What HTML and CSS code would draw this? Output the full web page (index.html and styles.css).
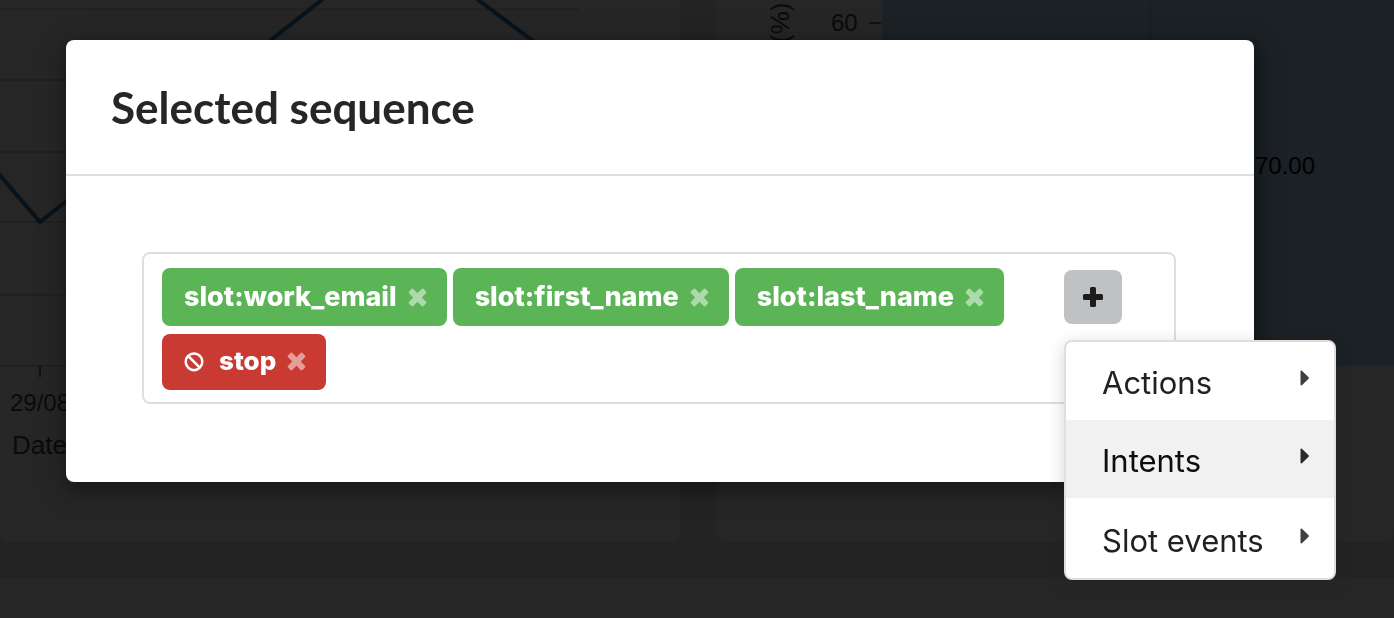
FILE: index.html
```html
<!DOCTYPE html>
<html lang="en">
<head>
<meta charset="utf-8">
<title>Selected sequence</title>
<link rel="stylesheet" href="styles.css">
</head>
<body>
<svg class="sprite" aria-hidden="true">
  <symbol id="times" viewBox="0 0 20 20"><path transform="rotate(45 10 10)" d="M8.200 -.8h3.600q1.400 0 1.400 1.400v6.200h6.200q1.400 0 1.400 1.400v3.600q0 1.400-1.400 1.400h-6.200v6.200q0 1.400-1.400 1.400h-3.600q-1.400 0-1.400-1.400v-6.200h-6.200q-1.400 0-1.400-1.400v-3.600q0-1.400 1.400-1.400h6.200v-6.200q0-1.400 1.400-1.400z"/></symbol>
  <symbol id="plus" viewBox="0 0 20 20"><path d="M8.500 0h3q1.500 0 1.500 1.500V7h5.500q1.500 0 1.500 1.500v3q0 1.500-1.500 1.500H13v5.500q0 1.500-1.500 1.500h-3Q7 20 7 18.500V13H1.500Q0 13 0 11.500v-3Q0 7 1.500 7H7V1.500Q7 0 8.500 0z"/></symbol>
  <symbol id="caret" viewBox="0 0 10 16"><path d="M0.500 1.500v13c0 1 1 1.300 1.700 .6l6.400-6.300c.5-.5.5-1.100 0-1.600L2.200 .9C1.500 .2.500.5.500 1.500z"/></symbol>
</svg>
<main class="dashboard">
  <section class="card">
    <svg class="chart" viewBox="0 0 680 542" role="img" aria-label="Line chart by date">
      <path class="grid-line" d="M0 9.500H580M0 80H580M0 152H580M0 222H580M0 295H580M0 366H580"/>
      <path class="tick" d="M40 366v11"/>
      <polyline class="series" points="-2,173 40,222 323,-1 400,-60 477,-1 580,76"/>
      <text class="tick-label" x="10" y="411">29/08</text>
      <text class="axis-label" x="12" y="454">Date</text>
    </svg>
  </section>
  <section class="card">
    <svg class="chart" viewBox="0 0 678 542" role="img" aria-label="Bar chart in percent">
      <rect class="bar" x="166" y="-10" width="520" height="376"/>
      <path class="bar-line" d="M435 0v366"/>
      <path class="tick" d="M153 23h12"/>
      <text class="axis-label" transform="translate(73 43) rotate(-90)">(%)</text>
      <text class="tick-label" x="115" y="31">60</text>
      <text class="value-label" x="539" y="174">70.00</text>
    </svg>
  </section>
  <section class="card card-wide"></section>
</main>

<div class="overlay">
  <div class="modal" role="dialog" aria-labelledby="title">
    <header class="modal-header"><h1 class="modal-title" id="title">Selected sequence</h1></header>
    <div class="modal-content">
      <div class="field">
        <div class="chips">
          <span class="chip">slot:work_email<button class="remove" aria-label="Remove work_email"><svg class="times"><use href="#times"/></svg></button></span>
          <span class="chip">slot:first_name<button class="remove" aria-label="Remove first_name"><svg class="times"><use href="#times"/></svg></button></span>
          <span class="chip">slot:last_name<button class="remove" aria-label="Remove last_name"><svg class="times"><use href="#times"/></svg></button></span>
          <span class="chip chip-stop"><svg class="ban" viewBox="0 0 24 24"><circle cx="12" cy="13" r="10"/><path d="M5 6l14 14"/></svg>stop<button class="remove" aria-label="Remove stop"><svg class="times"><use href="#times"/></svg></button></span>
        </div>
        <div class="adder">
          <button class="add" aria-label="Add" aria-expanded="true"><svg class="plus"><use href="#plus"/></svg></button>
          <div class="menu" role="menu">
            <button class="item" role="menuitem">Actions<svg class="caret"><use href="#caret"/></svg></button>
            <button class="item item-active" role="menuitem">Intents<svg class="caret"><use href="#caret"/></svg></button>
            <button class="item" role="menuitem">Slot events<svg class="caret"><use href="#caret"/></svg></button>
          </div>
        </div>
      </div>
    </div>
  </div>
</div>
</body>
</html>
```
FILE: styles.css
```css
* { box-sizing: border-box; }

body {
  margin: 0;
  background: #232323;
  font-family: Inter, "Liberation Sans", sans-serif;
}

button {
  margin: 0;
  padding: 0;
  border: 0;
  background: none;
  color: inherit;
  font: inherit;
  cursor: pointer;
}

.sprite { display: none; }

.dashboard {
  display: grid;
  grid-template-columns: 680fr 678fr;
  grid-template-rows: auto 1fr;
  gap: 36px;
  height: 100vh;
  overflow: hidden;
}

.card {
  overflow: hidden;
  border-radius: 0 0 8px 8px;
  background: #262626;
}

.card-wide {
  grid-column: 1 / -1;
  border-radius: 0;
}

.chart {
  display: block;
  width: 100%;
  font-family: "Liberation Sans", Arial, sans-serif;
}

.grid-line { stroke: #202020; stroke-width: 2; }
.tick { stroke: #111; stroke-width: 2; }
.series { fill: none; stroke: #07131c; stroke-width: 4; }
.bar { fill: #1c2125; }
.bar-line { stroke: #1a1f23; stroke-width: 2; }
.tick-label { fill: #0b0b0b; font-size: 24px; }
.axis-label { fill: #0a0a0a; font-size: 26px; }
.value-label { fill: #000; font-size: 24px; }

.overlay {
  position: fixed;
  inset: 0;
  padding: 40px 140px 40px 66px;
}

.modal {
  border-radius: 8px;
  background: #fff;
  box-shadow: 2px 6px 14px 4px rgba(0, 0, 0, .2), 2px 6px 30px 4px rgba(0, 0, 0, .2);
}

.modal-header {
  padding: 40px 45px;
  border-bottom: 2px solid #dedede;
}

.modal-title {
  margin: 0;
  color: #262626;
  font: 700 44px/54px Lato, sans-serif;
}

.modal-content { padding: 76px 78px 78px 76px; }

.field {
  display: flex;
  justify-content: space-between;
  padding: 14px 52px 12px 18px;
  border: 2px solid #dedede;
  border-radius: 8px;
}

.chips {
  display: flex;
  flex: 1;
  flex-wrap: wrap;
  gap: 8px 6px;
}

.chip {
  display: flex;
  align-items: center;
  padding: 12px 20px 12px 22px;
  border-radius: 8px;
  background: #5bb557;
  color: #fff;
  font-size: 27px;
  font-weight: 800;
  line-height: 34px;
}

.chip-stop {
  padding: 10px 20px 12px 22px;
  background: #c93a33;
  font-size: 26px;
}

.remove {
  display: flex;
  margin-left: 11px;
  opacity: .5;
}

.times { width: 19px; height: 19px; fill: #fff; }

.ban {
  width: 20px;
  height: 20px;
  margin-right: 15px;
  overflow: visible;
  fill: none;
  stroke: #fff;
  stroke-width: 3;
}

.adder {
  position: relative;
  align-self: flex-start;
  padding-top: 2px;
}

.add {
  display: flex;
  align-items: center;
  justify-content: center;
  width: 58px;
  height: 54px;
  border-radius: 8px;
  background: #c0c1c2;
}

.plus { width: 20px; height: 20px; fill: #1c1c1c; }

.menu {
  position: absolute;
  top: 72px;
  left: 0;
  width: 272px;
  overflow: hidden;
  border: 2px solid #dedede;
  border-radius: 8px;
  background: #fff;
  box-shadow: 0 4px 16px rgba(34, 36, 38, .2);
}

.item {
  display: flex;
  align-items: center;
  justify-content: space-between;
  width: 100%;
  padding: 23px 24px 19px 36px;
  color: #212121;
  font-size: 31px;
  line-height: 36px;
}

.item:last-child { padding-top: 25px; }

.item-active {
  background: #f1f1f1;
  color: #0d0d0d;
}

.item:last-child { padding-bottom: 19px; }

.caret {
  width: 10px;
  height: 16px;
  margin-bottom: 10px;
  fill: #404040;
}

.item-active .caret { fill: #2b2b2b; }
```
